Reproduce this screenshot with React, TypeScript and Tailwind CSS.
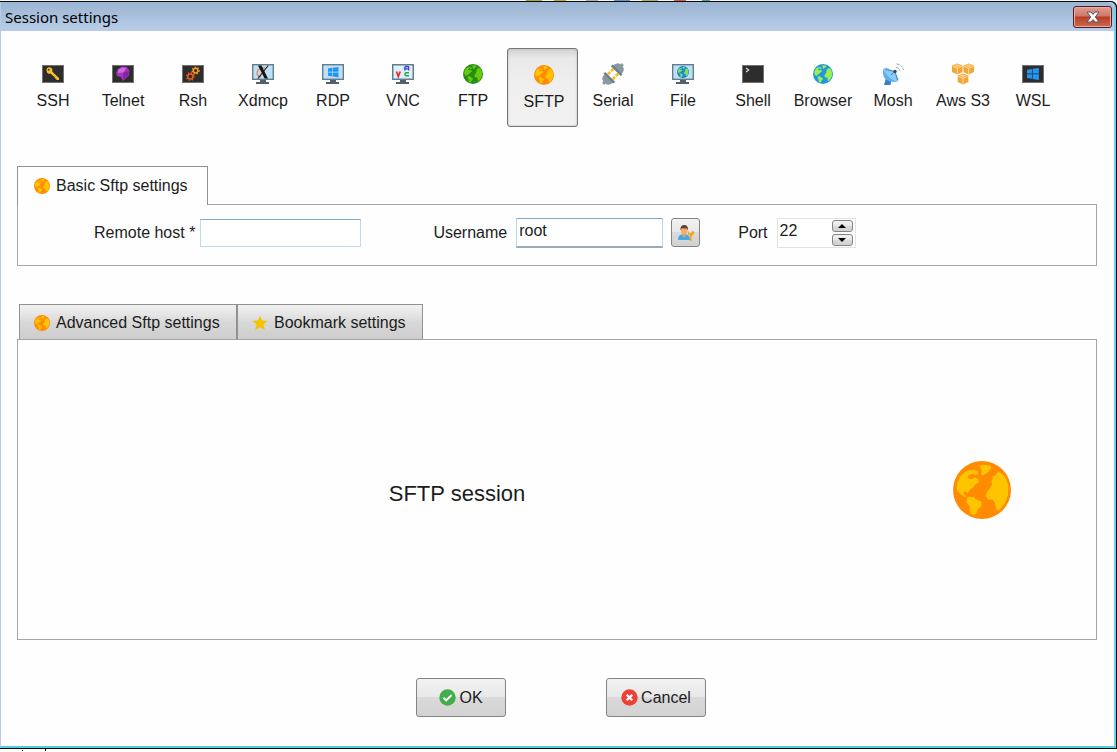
import React, { useState } from "react";

type IconProps = { className?: string };

function Globe({ className, sea, land }: IconProps & { sea: string; land: string }) {
  return (
    <svg className={className} viewBox="0 0 174 174" aria-hidden="true">
      <circle cx="87" cy="87" r="87" fill={sea} />
      <g fill={land}>
        <path d="M11 80C12 54 26 36 45 29C56 26 66 27 74 31L76 39L68 43L60 38L46 43L45 52L56 55L66 49L75 54L78 64L66 71L60 80L52 84L47 92L43 96L36 91L31 94L34 101L42 109L34 107L20 97L13 90Z" />
        <path d="M80 13L90 11L112 14L115 21L108 31L96 40L88 44L84 40L87 29L82 21Z" />
        <path d="M42 110L50 107L63 108L69 115L86 123L84 137L75 144L70 157L61 162L51 158L50 136L41 124Z" />
        <path d="M136 32L149 40L160 55L166 76L165 102L156 126L142 143L136 150L130 144L126 127L121 117L104 115L98 104L104 90L111 82L118 68L114 61L121 53L117 48L128 43Z" />
      </g>
    </svg>
  );
}

function Dark({ children }: { children?: React.ReactNode }) {
  return (
    <svg className="h-[22px] w-[22px]" viewBox="0 0 22 22" aria-hidden="true">
      <rect x="0.5" y="2.5" width="21" height="17" fill="#2d2d2d" stroke="#77716b" />
      {children}
    </svg>
  );
}

function Monitor({ children }: { children?: React.ReactNode }) {
  return (
    <svg className="h-[22px] w-[22px]" viewBox="0 0 22 22" aria-hidden="true">
      <path d="M8 16h6v3h3v2H4v-2h4z" fill="#52606a" />
      <rect x="0.7" y="1.7" width="20.6" height="14.6" fill="#c2e0f5" stroke="#647d8c" strokeWidth="1.4" />
      {children}
    </svg>
  );
}

function WindowsMark({ transform, fill = "#2196f3" }: { transform?: string; fill?: string }) {
  return (
    <path
      transform={transform}
      fill={fill}
      d="M0 1.6L4.6 .9V5.1H0ZM5.2 .8L11 0V5.1H5.2ZM0 5.8H4.6V10L0 9.3ZM5.2 5.8H11V11L5.2 10.1Z"
    />
  );
}

function Gear({ cx, cy, r, color }: { cx: number; cy: number; r: number; color: string }) {
  return (
    <g fill="none" stroke={color}>
      <circle cx={cx} cy={cy} r={r} strokeWidth="1.5" />
      <circle cx={cx} cy={cy} r={r + 1.2} strokeWidth="1.3" strokeDasharray="1.4 1.6" />
    </g>
  );
}

function Cube({ x, y }: { x: number; y: number }) {
  return (
    <g transform={`translate(${x} ${y})`}>
      <path d="M5.3 0L10.6 2V8.5L5.3 11L0 8.5V2Z" fill="#f3a536" />
      <path d="M5.3 .5L9.2 2.1L5.3 3.7L1.4 2.1Z" fill="#fac978" />
      <path d="M.6 2.7L5.3 4.7L10 2.7M5.3 4.7V10.4" fill="none" stroke="#fff0d2" strokeWidth=".7" />
    </g>
  );
}

const icon22 = "h-[22px] w-[22px]";
const globe20 = "m-px h-5 w-5";

const sessions: { name: string; icon: React.ReactNode }[] = [
  {
    name: "SSH",
    icon: (
      <Dark>
        <path d="M5 5.2Q7.3 3.6 9.5 5Q11 6.5 10.3 8.8L17 15V17H14.6L14 15.6H12.8V14.2L8.4 10.6Q6.3 11.2 5 9.5Q3.6 7.2 5 5.2Z" fill="#fbc02d" />
        <circle cx="6.7" cy="6.8" r="1" fill="#4b3a12" />
      </Dark>
    ),
  },
  {
    name: "Telnet",
    icon: (
      <Dark>
        <path d="M6 6L10 3.6L15 4L17.6 8L16.7 13L11 18L9 14.3L5 13L4.2 9.4Z" fill="#a535bb" />
        <path d="M6.4 6.4L10 4.4L14 5L11.5 9.5L6 10Z" fill="#d268df" />
        <path d="M17 8L11.5 9.5L11 17L16 13Z" fill="#8424a1" />
      </Dark>
    ),
  },
  {
    name: "Rsh",
    icon: (
      <Dark>
        <Gear cx={13.6} cy={7.6} r={2.3} color="#f59b22" />
        <Gear cx={8.3} cy={13.5} r={2.6} color="#ee5b16" />
      </Dark>
    ),
  },
  {
    name: "Xdmcp",
    icon: (
      <Monitor>
        <path d="M13 5Q7 4 5.2 9Q4.5 13 9 14" fill="none" stroke="#e98252" strokeWidth="1.3" />
        <path d="M6 2.5H9.5L16 15.5H12.6Z" fill="#151515" />
        <path d="M16.2 2.5L6 15.5" stroke="#151515" strokeWidth="1.1" />
      </Monitor>
    ),
  },
  { name: "RDP", icon: <Monitor><WindowsMark transform="translate(6 4) scale(.95)" /></Monitor> },
  {
    name: "VNC",
    icon: (
      <Monitor>
        <rect x="2" y="3" width="18" height="12" fill="#e4eef8" />
        <path d="M4.5 8.5L6.3 13.5L8.2 8.5" fill="none" stroke="#e02b35" strokeWidth="1.7" />
        <path d="M12.8 7.4V4.5Q12.8 3.5 14 3.5H15.7Q16.7 3.5 16.7 4.5V7.4M12.8 5.8H16.7" fill="none" stroke="#3b39dd" strokeWidth="1.3" />
        <path d="M17 9.7H14.2Q13 9.7 13 11.2Q13 12.8 14.2 12.8H17" fill="none" stroke="#21a84a" strokeWidth="1.5" />
      </Monitor>
    ),
  },
  { name: "FTP", icon: <Globe className={globe20} sea="#278c18" land="#65cc0b" /> },
  { name: "SFTP", icon: <Globe className={globe20} sea="#ff8c00" land="#ffc400" /> },
  {
    name: "Serial",
    icon: (
      <svg className={icon22} viewBox="0 0 22 22" aria-hidden="true">
        <g transform="rotate(45 11 11)">
          <path d="M11 -3V1M11 21V25" stroke="#8a9aa3" strokeWidth="3" />
          <path d="M5 5.5Q5 -1 9.5 -1H12.5Q17 -1 17 5.5ZM5 16.5Q5 23 9.5 23H12.5Q17 23 17 16.5Z" fill="#8999a3" />
          <path d="M4 4.6H18V7H4ZM4 15H18V17.4H4Z" fill="#6b7f8c" />
          <path d="M7.6 7V10.4M14.4 7V10.4M7.6 11.6V15M14.4 11.6V15" stroke="#fbbd22" strokeWidth="2.6" />
        </g>
      </svg>
    ),
  },
  {
    name: "File",
    icon: (
      <Monitor>
        <svg x="5" y="3" width="12" height="12" viewBox="0 0 20 20">
          <Globe sea="#1688cf" land="#82dc68" />
        </svg>
      </Monitor>
    ),
  },
  {
    name: "Shell",
    icon: <Dark><path d="M4 5L6.7 7L4 9" fill="none" stroke="#e5e5e5" strokeWidth="1.1" /></Dark>,
  },
  { name: "Browser", icon: <Globe className={globe20} sea="#2196df" land="#9cec54" /> },
  {
    name: "Mosh",
    icon: (
      <svg className={icon22} viewBox="0 0 22 22" aria-hidden="true">
        <path d="M4 15L2 22H8.5L9.5 16Z" fill="#3482c5" />
        <path d="M2 5Q-1 12 4 16.5Q9.5 20.5 16.5 18Z" fill="#5fb0ee" />
        <ellipse cx="9.2" cy="11.4" rx="9.4" ry="3.4" transform="rotate(42 9.2 11.4)" fill="#8ecbfa" />
        <path d="M3.5 6.5L13 8.5L15.5 17M13 8.5L9 12" fill="none" stroke="#3b82bd" />
        <circle cx="13" cy="8.5" r="1.7" fill="#294a66" />
        <path d="M14 4.5Q17.5 5 18 8M14.5 1Q20 1.2 21.5 7" fill="none" stroke="#87aeb0" strokeDasharray="3 1" />
      </svg>
    ),
  },
  {
    name: "Aws S3",
    icon: (
      <svg className={icon22} viewBox="0 0 22 22" aria-hidden="true">
        <Cube x={0} y={0.5} />
        <Cube x={11.4} y={0.5} />
        <Cube x={5.7} y={10.6} />
      </svg>
    ),
  },
  { name: "WSL", icon: <Dark><WindowsMark transform="translate(5 5) scale(1.08)" /></Dark> },
];

function UserKey() {
  return (
    <svg className="h-[18px] w-[18px]" viewBox="0 0 18 18" aria-hidden="true">
      <path d="M1 16Q1 10.5 5 10.5H9Q13 10.5 13 16Z" fill="#45abe6" />
      <path d="M5.5 9H8.8V12L7.1 13.5L5.5 12Z" fill="#f09b4b" />
      <ellipse cx="7.2" cy="6" rx="3.3" ry="4.3" fill="#f6ae63" />
      <path d="M3.5 6.5Q2.8 1 7.3 1Q11.6 1 10.9 6.5L9.8 4.3Q7.5 5 4.8 3.9Z" fill="#5f4336" />
      <path d="M11 6.8L12.5 9L14 9.2L15.7 6.6L17.5 8.5L16 11.3L14.6 12V17H12.9V12L11 10Z" fill="#f6a51c" />
    </svg>
  );
}

function Star() {
  return (
    <svg className="h-4 w-4" viewBox="0 0 16 16" aria-hidden="true">
      <path d="M8 .7L10.1 5.4L15.5 6L11.6 9.5L12.8 15L8 12.2L3.2 15L4.4 9.5L.5 6L5.9 5.4Z" fill="#f4c400" />
    </svg>
  );
}

const raised = "border border-[#848484] bg-[linear-gradient(#f2f2f2,#e8e8e8_48%,#dadada_49%,#d2d2d2)]";
const tab = "flex items-center border border-b-0 border-[#929292]";

export default function App() {
  const [active, setActive] = useState("SFTP");
  const [host, setHost] = useState("");
  const [user, setUser] = useState("root");
  const [port, setPort] = useState(22);

  return (
    <div className="flex min-h-screen flex-col bg-[#fffffa] font-['Liberation_Sans',Arial,sans-serif] text-base leading-5 text-[#1c1c1c]">
      <div className="flex h-px bg-[#f5f5f2] pl-[510px]" aria-hidden="true">
        <span className="ml-4 w-4 bg-[#a5a83a]" />
        <span className="ml-3 w-3 bg-[#c5a83c]" />
        <span className="ml-5 w-3 bg-[#b5b0a0]" />
        <span className="ml-4 w-4 bg-[#589ac1]" />
        <span className="ml-3 w-4 bg-[#b7ac65]" />
        <span className="ml-4 w-3 bg-[#d65b4a]" />
        <span className="ml-4 w-2 bg-[#45a69b]" />
      </div>

      <main className="flex flex-1 flex-col rounded-tr-md border-t border-r border-b border-[#0b0b10] bg-[#0b0b10]">
        <div className="flex flex-1 flex-col rounded-tr-md border-r-2 border-b-2 border-l border-r-[#6bd3ef] border-b-[#5ccbe0] border-l-[#b8cbe5] bg-[#fefefe]">
          <header className="flex h-[29px] shrink-0 items-center justify-between rounded-tr-md bg-[linear-gradient(#9bb5d2,#b9cde8)] pr-[2px] pl-1">
            <h1 className="font-['Noto_Sans','Open_Sans',sans-serif] text-[15px] text-black">Session settings</h1>
            <button
              aria-label="Close"
              className="flex h-[22px] w-[39px] items-center justify-center rounded-[3px] border border-[#541c24] bg-[linear-gradient(#dea093,#cf7668_45%,#b93d27_50%,#cb6a50)] shadow-[inset_0_0_0_1px_#e5ada2]"
            >
              <svg className="h-3 w-[14px]" viewBox="0 0 14 12" aria-hidden="true">
                <path d="M1 1H5L7 3.5L9 1H13L9.3 6L13 11H9L7 8.5L5 11H1L4.7 6Z" fill="#fff" stroke="#5b5358" />
              </svg>
            </button>
          </header>

          <div className="flex flex-1 flex-col pt-[17px] pr-[17px] pb-[29px] pl-4">
            <nav className="flex" aria-label="Session type">
              {sessions.map((s) => (
                <button
                  key={s.name}
                  aria-pressed={s.name === active}
                  onClick={() => setActive(s.name)}
                  className={
                    "flex h-[79px] w-[71px] -mr-px flex-col items-center gap-[6px] rounded-[3px] border whitespace-nowrap " +
                    (s.name === active
                      ? "border-[#777] bg-[linear-gradient(#d2d2d2,#e9e9e9_12%,#efefef_45%,#f1f1f1)] pt-[15px] pl-[3px] shadow-[inset_0_0_2px_#aaa]"
                      : "border-transparent pt-[14px] pl-px")
                  }
                >
                  {s.icon}
                  {s.name}
                </button>
              ))}
            </nav>

            <section className="mt-[39px]" aria-label="Basic settings">
              <h2 className={tab + " relative -mb-px h-[39px] w-[191px] gap-[6px] bg-[#fefefe] pb-px pl-4"}>
                <Globe className="h-4 w-4" sea="#ff8c00" land="#ffc400" />
                Basic Sftp settings
              </h2>
              <div className="flex h-[62px] items-center border border-[#a5a5a5] pb-[5px] pl-[76px]">
                <label htmlFor="host" className="whitespace-nowrap">Remote host *</label>
                <input
                  id="host"
                  value={host}
                  onChange={(e) => setHost(e.target.value)}
                  className="ml-[5px] h-7 w-[161px] border border-[#bbdaea] border-t-[#82aac8] bg-white px-[3px] outline-none"
                />
                <label htmlFor="user" className="ml-[72px]">Username</label>
                <input
                  id="user"
                  value={user}
                  onChange={(e) => setUser(e.target.value)}
                  className="ml-[9px] h-[30px] w-[147px] border border-b-2 border-[#b7d8e6] border-t-[#7eaacd] border-b-[#9aabb8] bg-white px-[2px] pb-[3px] outline-none"
                />
                <button aria-label="Manage users" className={raised + " ml-2 flex h-[29px] w-[29px] items-center justify-center rounded-[3px]"}>
                  <UserKey />
                </button>
                <label htmlFor="port" className="ml-[38px]">Port</label>
                <div className="ml-[9px] flex h-[30px] w-[79px] items-center justify-between border border-[#e2e2e2] bg-white pr-[2px]">
                  <input
                    id="port"
                    inputMode="numeric"
                    value={port}
                    onChange={(e) => setPort(Number(e.target.value) || 0)}
                    className="h-full w-12 pb-[3px] pl-[2px] outline-none"
                  />
                  <div className="flex flex-col gap-[2px]">
                    <button aria-label="Increase port" onClick={() => setPort(port + 1)} className={raised + " flex h-3 w-[21px] items-center justify-center rounded-[3px]"}>
                      <svg className="h-1 w-2" viewBox="0 0 8 4" aria-hidden="true"><path d="M4 0L8 4H0Z" /></svg>
                    </button>
                    <button aria-label="Decrease port" onClick={() => setPort(port - 1)} className={raised + " flex h-3 w-[21px] items-center justify-center rounded-[3px]"}>
                      <svg className="h-1 w-2" viewBox="0 0 8 4" aria-hidden="true"><path d="M0 0H8L4 4Z" /></svg>
                    </button>
                  </div>
                </div>
              </div>
            </section>

            <section className="mt-[38px] flex flex-1 flex-col" aria-label="More settings">
              <div className="flex pl-[2px]">
                <button className={tab + " h-[35px] w-[218px] gap-[6px] bg-[linear-gradient(#f1f1f1,#e4e4e4_30%,#d8d8d8_50%,#cecece)] pt-px pl-[14px] whitespace-nowrap"}>
                  <Globe className="h-4 w-4" sea="#ff8c00" land="#ffc400" />
                  Advanced Sftp settings
                </button>
                <button className={tab + " h-[35px] w-[186px] gap-[6px] bg-[linear-gradient(#f1f1f1,#e4e4e4_30%,#d8d8d8_50%,#cecece)] pt-px pl-[14px] whitespace-nowrap"}>
                  <Star />
                  Bookmark settings
                </button>
              </div>
              <div className="flex flex-1 items-center border border-[#a5a5a5]">
                <p className="flex-1 pt-2 pl-7 text-center text-[22px] leading-7">SFTP session</p>
                <div className="flex w-[228px] justify-center">
                  <Globe className="h-[58px] w-[58px]" sea="#ff8c00" land="#ffc400" />
                </div>
              </div>
            </section>

            <footer className="mt-[38px] flex gap-[100px] pl-[399px]">
              <button className={raised + " flex h-[39px] w-[90px] items-center justify-center gap-[3px] rounded-[3px]"}>
                <svg className="h-[17px] w-[17px]" viewBox="0 0 17 17" aria-hidden="true">
                  <circle cx="8.5" cy="8.5" r="8.2" fill="#43ad49" />
                  <path d="M4.5 8.7L7.2 11.4L12.6 6" fill="none" stroke="#fff" strokeWidth="2" />
                </svg>
                OK
              </button>
              <button className={raised + " flex h-[39px] w-[100px] items-center justify-center gap-[3px] rounded-[3px]"}>
                <svg className="h-[17px] w-[17px]" viewBox="0 0 17 17" aria-hidden="true">
                  <circle cx="8.5" cy="8.5" r="8.2" fill="#ef4034" />
                  <path d="M5.7 5.7L11.3 11.3M11.3 5.7L5.7 11.3" stroke="#fff" strokeWidth="2.3" />
                </svg>
                Cancel
              </button>
            </footer>
          </div>
        </div>
      </main>

      <div className="flex h-[3px] items-end bg-[#fffffa] pb-px pl-[22px]" aria-hidden="true">
        <span className="h-px w-px bg-black" />
        <span className="ml-[22px] h-[2px] w-px bg-black" />
      </div>
    </div>
  );
}
